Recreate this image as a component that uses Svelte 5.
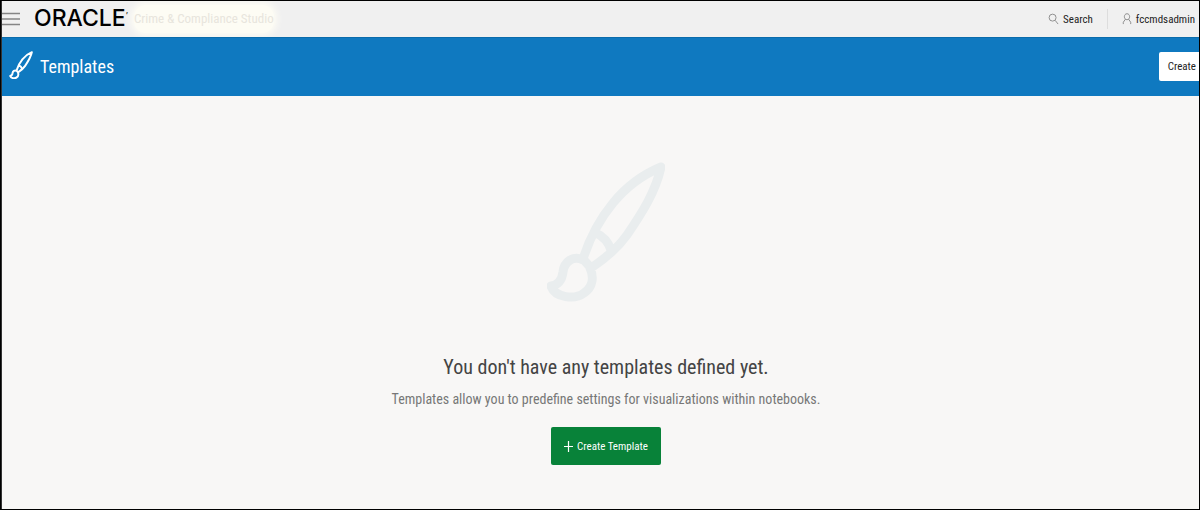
<script>
  const product = 'Crime & Compliance Studio';
  const user = 'fccmdsadmin';
</script>

{#snippet brush(width)}
  <path
    d="M131 16C112 24 96 36 83 52C69 69 60 86 53 108L61 117C76 107 87 98 97 84C112 62 126 40 131 16Z M66 82Q77 87 81 99 M53 109C43 104 34 111 33 121C32 129 28 134 21 135C25 147 45 149 54 142C63 136 64 126 60 117"
    fill="none"
    stroke="currentColor"
    stroke-width={width}
    stroke-linejoin="round"
    stroke-linecap="round"
  />
{/snippet}

<div class="page">
  <header class="top">
    <button class="menu" aria-label="Open navigation">
      <svg width="18" height="14" viewBox="0 0 18 14"><path d="M0 1.5h18M0 7h18M0 12.5h18" stroke="#858585" stroke-width="1.5" /></svg>
    </button>
    <span class="brand">ORACLE<sup>’</sup></span>
    <span class="product">{product}</span>
    <button class="link search">
      <svg width="11" height="12" viewBox="0 0 12 13" fill="none" stroke="#888" stroke-width="1"><circle cx="5" cy="5" r="3.8" /><path d="M7.8 8l3.2 4" /></svg>
      Search
    </button>
    <button class="link user">
      <svg width="10" height="12" viewBox="0 0 10 13" fill="none" stroke="#888" stroke-width="1"><path d="M5 .8C1.2.8 1.2 7.3 5 7.3S8.8.8 5 .8ZM3.3 6.7L1 10V12M6.7 6.7L9 10V12" /></svg>
      {user}
    </button>
  </header>

  <div class="banner">
    <svg class="mark" width="24" height="28" viewBox="15 10 122 140" preserveAspectRatio="none">{@render brush(10)}</svg>
    <h1>Templates</h1>
    <button class="create">Create</button>
  </div>

  <main>
    <svg class="hero" width="118" height="140" viewBox="17 11 118 140">{@render brush(9)}</svg>
    <h2>You don't have any templates defined yet.</h2>
    <p>Templates allow you to predefine settings for visualizations within notebooks.</p>
    <button class="primary">
      <svg width="9" height="11" viewBox="0 0 9 11"><path d="M4.5 0v11M0 5.5h9" stroke="#fff" stroke-width="1.2" /></svg>
      Create Template
    </button>
  </main>
</div>

<style>
  .page {
    box-sizing: border-box;
    min-height: 100vh;
    display: flex;
    flex-direction: column;
    border: 1px solid #000;
    box-shadow: inset 1px 0 #333;
    background: #f8f7f6;
    font-family: "Roboto Condensed", "Arial Narrow", "Liberation Sans", Arial, sans-serif;
    color: #222;
    overflow: hidden;
  }
  button {
    font: inherit;
    color: inherit;
    border: 0;
    background: none;
    padding: 0;
    margin: 0;
    cursor: pointer;
  }
  svg {
    flex: none;
    display: block;
  }
  .top {
    display: flex;
    align-items: center;
    height: 36px;
    margin-left: 1px;
    background: #f0f0f0;
    font-size: 11px;
    white-space: nowrap;
  }
  .menu {
    margin-right: 14px;
  }
  .brand {
    font: 500 23px/32px Inter, sans-serif;
    color: #000;
    height: 34px;
  }
  .brand sup {
    font-size: 8px;
    line-height: 0;
    vertical-align: 8px;
  }
  .product {
    margin-left: 6px;
    font-size: 13px;
    line-height: 28px;
    color: #e8e5dd;
    background: #fdfcf4;
    box-shadow: 0 0 6px 3px #fdfcf4;
    border-radius: 12px;
  }
  .link {
    display: flex;
    align-items: center;
    gap: 4px;
    height: 20px;
  }
  .search {
    margin-left: auto;
    padding-right: 14px;
    border-right: 1px solid #ddd;
  }
  .user {
    padding: 0 4px 0 14px;
  }
  .banner {
    display: flex;
    align-items: center;
    height: 59px;
    margin-left: 1px;
    background: #0f79c0;
    box-shadow: inset 0 1px #0a6cab;
    color: #fff;
  }
  .mark {
    margin-left: 7px;
    margin-bottom: 4px;
  }
  h1 {
    margin: 0 auto 0 7px;
    font-size: 18px;
    line-height: 28px;
    font-weight: 400;
  }
  .create {
    padding: 0 3px 0 9px;
    height: 29px;
    border-radius: 2px 0 0 2px;
    background: #fff;
    color: #222;
    font-size: 11px;
  }
  main {
    flex: 1;
    display: flex;
    flex-direction: column;
    align-items: center;
    padding: 66px 0 24px 12px;
    text-align: center;
  }
  .hero {
    color: #e9edee;
  }
  h2 {
    margin: 50px 0 0;
    font-size: 20px;
    line-height: 30px;
    font-weight: 400;
    color: #444;
  }
  p {
    margin: 5px 0 16px;
    font-size: 14px;
    line-height: 24px;
    color: #777;
  }
  .primary {
    display: flex;
    align-items: center;
    justify-content: center;
    gap: 4px;
    height: 38px;
    padding: 0 13px;
    border-radius: 2px;
    background: #088239;
    color: #fff;
    font-size: 11px;
  }
</style>
